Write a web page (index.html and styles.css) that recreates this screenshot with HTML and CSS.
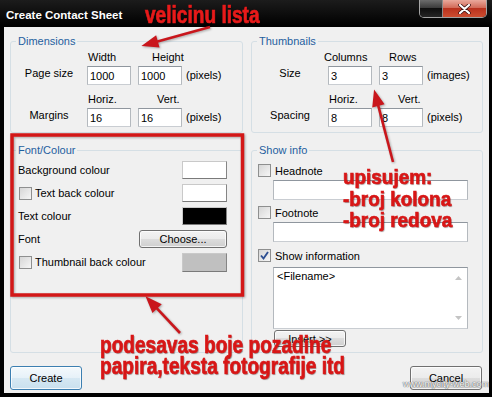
FILE: index.html
```html
<!DOCTYPE html>
<html lang="en">
<head>
  <meta charset="UTF-8">
  <title>Create Contact Sheet</title>
  <link rel="stylesheet" href="styles.css">
</head>
<body>

<div class="window">
  <div class="titlebar">
    <span class="title">Create Contact Sheet</span>
    <div class="caption">
      <span class="cap-max"></span>
      <span class="cap-close">
        <svg width="13" height="10" viewBox="0 0 13 10"><path d="M2 1 L11 9 M11 1 L2 9" stroke="#3a1010" stroke-width="3.6" stroke-linecap="round"/><path d="M2 1 L11 9 M11 1 L2 9" stroke="#fff" stroke-width="2.2" stroke-linecap="round"/></svg>
      </span>
    </div>
  </div>

  <div class="client">
    <div class="groups">

      <fieldset class="group">
        <legend>Dimensions</legend>
        <div class="dimgrid">
          <span></span><span class="colhead ofs-1">Width</span><span class="colhead ofs-14">Height</span><span></span>
          <span class="rowlabel">Page size</span><input class="num" value="1000"><input class="num" value="1000"><span class="unit">(pixels)</span>
          <span></span><span class="colhead ofs-1">Horiz.</span><span class="colhead ofs-19">Vert.</span><span></span>
          <span class="rowlabel">Margins</span><input class="num" value="16"><input class="num" value="16"><span class="unit">(pixels)</span>
        </div>
      </fieldset>

      <fieldset class="group">
        <legend>Thumbnails</legend>
        <div class="dimgrid thumbs">
          <span></span><span class="colhead ofs-n4">Columns</span><span class="colhead ofs-10">Rows</span><span></span>
          <span class="rowlabel">Size</span><input class="num" value="3"><input class="num" value="3"><span class="unit">(images)</span>
          <span></span><span class="colhead ofs-1">Horiz.</span><span class="colhead ofs-19">Vert.</span><span></span>
          <span class="rowlabel">Spacing</span><input class="num" value="8"><input class="num" value="8"><span class="unit">(pixels)</span>
        </div>
      </fieldset>

      <fieldset class="group">
        <legend>Font/Colour</legend>
        <div class="fc-list">
          <div class="fc-row">
            <span class="fc-label">Background colour</span>
            <span class="swatch"></span>
          </div>
          <div class="fc-row">
            <span class="fc-label"><span class="cb"></span>Text back colour</span>
            <span class="swatch"></span>
          </div>
          <div class="fc-row">
            <span class="fc-label">Text colour</span>
            <span class="swatch black"></span>
          </div>
          <div class="fc-row">
            <span class="fc-label">Font</span>
            <span class="btn small">Choose...</span>
          </div>
          <div class="fc-row">
            <span class="fc-label"><span class="cb"></span>Thumbnail back colour</span>
            <span class="swatch grey"></span>
          </div>
        </div>
      </fieldset>

      <fieldset class="group">
        <legend>Show info</legend>
        <div class="si">
          <div class="check-row"><span class="cb"></span>Headnote</div>
          <input class="field" value="">
          <div class="check-row gap-6"><span class="cb"></span>Footnote</div>
          <input class="field" value="">
          <div class="check-row gap-7">
            <span class="cb">
              <svg width="11" height="11" viewBox="0 0 11 11"><path d="M2 5.5 L4.5 8.5 L9 2" fill="none" stroke="#2d4f92" stroke-width="1.9"/></svg>
            </span>Show information
          </div>
          <div class="memo">
            <span class="memo-text">&lt;Filename&gt;</span>
            <span class="memo-scroll">
              <svg width="7" height="4" viewBox="0 0 7 4"><path d="M0 4 L3.5 0 L7 4 Z" fill="#c4c4c4"/></svg>
              <svg width="7" height="4" viewBox="0 0 7 4"><path d="M0 0 L3.5 4 L7 0 Z" fill="#c4c4c4"/></svg>
            </span>
          </div>
          <span class="btn insert">Insert &gt;&gt;</span>
        </div>
      </fieldset>

    </div>

    <div class="footer">
      <span class="btn big default">Create</span>
      <span class="btn big">Cancel</span>
    </div>
  </div>

  <!-- annotations drawn over the dialog -->
  <svg class="marks" width="492" height="397" viewBox="0 0 492 397">
    <rect x="12" y="135" width="230.5" height="160" fill="none" stroke="#d31717" stroke-width="3.5"/>
    <g stroke="#c9161c" stroke-width="2.6" fill="#c9161c">
      <line x1="210" y1="27" x2="156.6" y2="41.8"/>
      <polygon points="145,45 157.8,46.1 155.4,37.5"/>
      <line x1="393" y1="162" x2="378" y2="104.6"/>
      <polygon points="375,93 382.4,103.5 373.7,105.7"/>
      <line x1="180" y1="333" x2="156.2" y2="307.7"/>
      <polygon points="148,299 159.5,304.6 152.9,310.8"/>
    </g>
  </svg>

  <p class="note note-size">velicinu lista</p>
  <p class="note note-grid">upisujem:<br>-broj kolona<br>-broj redova</p>
  <p class="note note-colour">podesavas boje pozadine<br>papira,teksta fotografije itd</p>
  <span class="watermark">www.mycity-web.com</span>
</div>

</body>
</html>
```

FILE: styles.css
```css
body {
  margin: 0;
  background: #000;
  font-family: "Liberation Sans", Arial, sans-serif;
  font-size: 11px;
  color: #000;
}

.window {
  position: relative;
  width: 492px;
  height: 397px;
  background: linear-gradient(#1c1c1c, #000 26px);
  overflow: hidden;
}

.titlebar {
  height: 27px;
  display: flex;
  justify-content: space-between;
  align-items: flex-start;
}

.title {
  color: #fff;
  font-weight: bold;
  font-size: 11.5px;
  line-height: 13px;
  padding: 9px 0 0 6px;
}

.caption {
  display: flex;
  height: 17px;
  margin-right: 5px;
  border: 1px solid rgba(215, 215, 215, 0.75);
  border-top: 0;
  border-radius: 0 0 5px 5px;
  overflow: hidden;
}

.cap-max {
  width: 22px;
  background: linear-gradient(#6c6c6c, #3c3c3c 45%, #0e0e0e 50%, #252525);
  border-right: 1px solid #8a8a8a;
}

.cap-close {
  width: 43px;
  display: flex;
  align-items: center;
  justify-content: center;
  background: linear-gradient(#eaa99c, #d26b59 45%, #b9321e 50%, #cc4d30);
}

.client {
  margin: 0 3px 0 4px;
  height: 366px;
  box-sizing: border-box;
  padding: 8px 6px 0 6px;
  background: #f0f0f0;
}

.groups {
  display: grid;
  grid-template-columns: 233px 232px;
  grid-template-rows: 98px 209px;
  gap: 11px 8px;
}

.group {
  margin: 0;
  padding: 0;
  min-width: 0;
  border: 1px solid #d5dfe5;
  border-radius: 3px;
}

legend {
  color: #1f5f9f;
  font-size: 11px;
  line-height: 13px;
  padding: 0 2px;
  margin-left: 5px;
}

/* Dimensions / Thumbnails */
.dimgrid {
  display: grid;
  grid-template-columns: 69px 44px 44px auto;
  grid-template-rows: 15px 19px 23px 19px;
  column-gap: 7px;
  padding: 3px 0 5px 0;
}

.colhead {
  align-self: end;
  padding-bottom: 2px;
  line-height: 13px;
}

.ofs-1 { padding-left: 1px; }
.ofs-10 { padding-left: 10px; }
.ofs-14 { padding-left: 14px; }
.ofs-19 { padding-left: 19px; }
.ofs-n4 { margin-left: -4px; }

.rowlabel {
  text-align: center;
  padding-left: 7px;
  line-height: 13px;
  margin-top: 1px;
}

.unit {
  margin-left: -3px;
  align-self: center;
  line-height: 13px;
}

.num,
.field {
  box-sizing: border-box;
  margin: 0;
  padding: 1px 2px 0 2px;
  border: 1px solid;
  border-color: #8f969e #b4b9be #c9cdd2 #b4b9be;
  background: #fff;
  font-family: inherit;
  font-size: 11px;
  color: #000;
  outline: none;
}

.num {
  width: 44px;
  height: 19px;
}

/* Font/Colour */
.fc-list {
  display: flex;
  flex-direction: column;
  gap: 5px;
  padding: 4px 15px 0 7px;
}

.fc-row {
  height: 18px;
  display: flex;
  align-items: center;
  justify-content: space-between;
}

.fc-label {
  display: flex;
  align-items: center;
  gap: 3px;
}

.fc-label .cb {
  margin-left: 1px;
}

.swatch {
  box-sizing: border-box;
  width: 45px;
  height: 18px;
  background: #fff;
  border: 1px solid;
  border-color: #c9c9c9 #858585 #7a7a7a #c9c9c9;
}

.swatch.black { background: #000; }
.swatch.grey { background: #c0c0c0; height: 19px; }

.cb {
  box-sizing: border-box;
  width: 13px;
  height: 13px;
  flex: none;
  display: flex;
  align-items: center;
  justify-content: center;
  border: 1px solid #8e8f8f;
  background: linear-gradient(135deg, #d6d6d6, #f6f6f6);
}

/* Show info */
.si {
  display: flex;
  flex-direction: column;
  align-items: flex-start;
  padding: 7px 0 0 6px;
}

.check-row {
  display: flex;
  align-items: center;
  gap: 4px;
  height: 13px;
}

.gap-6 { margin-top: 6px; }
.gap-7 { margin-top: 7px; }

.field {
  width: 195px;
  height: 20px;
  margin: 3px 0 0 15px;
}

.memo {
  box-sizing: border-box;
  width: 195px;
  height: 62px;
  margin: 5px 0 0 15px;
  display: flex;
  justify-content: space-between;
  background: #fff;
  border: 1px solid;
  border-color: #8f969e #b4b9be #c9cdd2 #b4b9be;
}

.memo-text {
  padding: 2px 0 0 3px;
  line-height: 13px;
}

.memo-scroll {
  width: 17px;
  display: flex;
  flex-direction: column;
  justify-content: space-between;
  align-items: center;
  padding: 8px 0 8px 0;
}

/* buttons */
.btn {
  box-sizing: border-box;
  display: flex;
  align-items: center;
  justify-content: center;
  border: 1px solid #707070;
  border-radius: 3px;
  background: linear-gradient(#f3f3f3, #ebebeb 50%, #dddddd 50%, #cfcfcf);
  box-shadow: inset 0 0 0 1px rgba(255, 255, 255, 0.75);
  font-size: 11px;
}

.btn.small {
  width: 88px;
  height: 18px;
}

.btn.insert {
  width: 72px;
  height: 17px;
  margin: 1px 0 0 16px;
}

.btn.big {
  width: 72px;
  height: 24px;
}

.btn.default {
  border-color: #3c7fb1;
  background: linear-gradient(#f4f9fc, #e6f1f8 50%, #d6e8f3 50%, #c9e0ee);
}

.footer {
  display: flex;
  justify-content: space-between;
  margin-top: 13px;
  padding-right: 1px;
}

/* annotations */
.marks {
  position: absolute;
  left: 0;
  top: 0;
  pointer-events: none;
  filter: drop-shadow(1px 1px 1px rgba(0, 0, 0, 0.3));
}

.note {
  position: absolute;
  margin: 0;
  color: #d81616;
  font-family: "Liberation Sans", Arial, sans-serif;
  font-weight: bold;
  white-space: nowrap;
  transform-origin: 0 0;
  -webkit-text-stroke: 0.7px currentColor;
  text-shadow: 1px 1px 1px rgba(0, 0, 0, 0.35);
}

.note-size {
  left: 145px;
  top: 3px;
  font-size: 23px;
  line-height: 24px;
  color: #e81a1a;
  transform: scaleX(0.83);
}

.note-grid {
  left: 343px;
  top: 166px;
  font-size: 21px;
  line-height: 21.5px;
  transform: scaleX(0.9);
}

.note-colour {
  left: 100px;
  top: 334.5px;
  font-size: 23px;
  line-height: 21px;
  transform: scaleX(0.83);
}

.watermark {
  position: absolute;
  left: 403px;
  top: 379px;
  font-size: 9px;
  color: #fff;
  text-shadow: 0 0 1px #555, 0 0 1px #555;
}
```
